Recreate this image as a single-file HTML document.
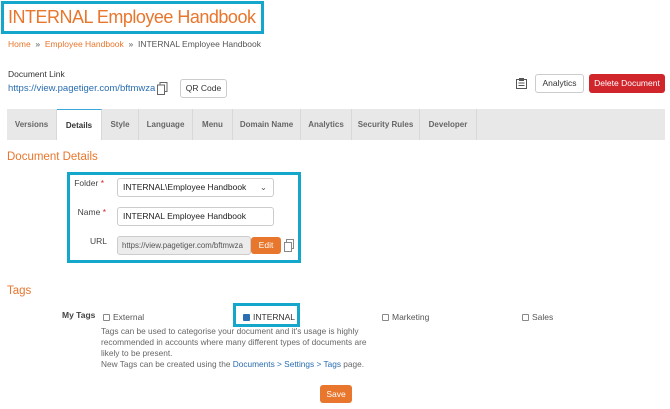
<!DOCTYPE html><html><head><style>
*{margin:0;padding:0;box-sizing:border-box}
body{width:670px;height:409px;background:#fff;font-family:"Liberation Sans",sans-serif;position:relative;overflow:hidden;color:#333}
.a{position:absolute;white-space:nowrap}
.o{color:#e8762c}
.b{color:#2a6db0}
.btn{position:absolute;border:1px solid #ccc;border-radius:3px;background:#fff;font-size:8.5px;text-align:center;color:#333}
.tab{position:absolute;top:109px;height:31px;border-right:1px solid #d8d8d8;font-size:8px;color:#666;text-align:center;line-height:31px;font-weight:bold}
.inp{position:absolute;border:1px solid #ccc;border-radius:3px;background:#fff;font-size:8.5px;padding-left:5px;line-height:17px;color:#222;overflow:hidden}
.lbl{position:absolute;font-size:8.5px;color:#444;text-align:right;width:40px}
.cb{display:inline-block;width:7px;height:7px;border:1px solid #888;border-radius:1px;vertical-align:-1px;margin-right:3px}
.hb{position:absolute;border:3px solid #14a7cb}
</style></head><body>
<div class="hb" style="left:1px;top:1px;width:263px;height:33px"></div>
<div class="a o" style="left:8px;top:7px;font-size:18px;letter-spacing:-0.5px">INTERNAL Employee Handbook</div>
<div class="a" style="left:8px;top:39px;font-size:8.5px;color:#555"><span class="o">Home</span> &nbsp;» &nbsp;<span class="o">Employee Handbook</span> &nbsp;» &nbsp;INTERNAL Employee Handbook</div>
<div class="a" style="left:8px;top:69px;font-size:8.5px;color:#333">Document Link</div>
<div class="a b" style="left:8px;top:83px;font-size:9.5px">https://view.pagetiger.com/bftmwza</div>
<svg class="a" style="left:157px;top:82px" width="11" height="13"><rect x="3" y="0.5" width="7" height="9" fill="#fff" stroke="#666"/><rect x="0.5" y="3" width="7" height="9.5" fill="#fff" stroke="#666"/></svg>
<div class="btn" style="left:180px;top:79px;width:47px;height:19px;line-height:17px">QR Code</div>
<svg class="a" style="left:516px;top:78px" width="11" height="11"><rect x="0.5" y="1.5" width="10" height="9" fill="none" stroke="#555"/><rect x="3" y="0" width="5" height="3" fill="#555"/><line x1="2.5" y1="5" x2="8.5" y2="5" stroke="#555"/><line x1="2.5" y1="7.5" x2="8.5" y2="7.5" stroke="#555"/></svg>
<div class="btn" style="left:535px;top:74px;width:49px;height:19px;line-height:17px">Analytics</div>
<div class="btn" style="left:589px;top:74px;width:76px;height:19px;line-height:19px;background:#d1252c;border:none;color:#fff">Delete Document</div>
<div class="a" style="left:7px;top:109px;width:658px;height:31px;background:#e8e8e8"></div>
<div class="tab" style="left:7px;width:50px">Versions</div>
<div class="tab" style="left:57px;width:45px;background:#fff;color:#333;border-top:1px solid #3aa8d8">Details</div>
<div class="tab" style="left:102px;width:37px">Style</div>
<div class="tab" style="left:139px;width:54px">Language</div>
<div class="tab" style="left:193px;width:40px">Menu</div>
<div class="tab" style="left:233px;width:68px">Domain Name</div>
<div class="tab" style="left:301px;width:51px">Analytics</div>
<div class="tab" style="left:352px;width:68px">Security Rules</div>
<div class="tab" style="left:420px;width:57px">Developer</div>
<div class="a o" style="left:7px;top:151px;font-size:11.5px">Document Details</div>
<div class="hb" style="left:67px;top:172px;width:234px;height:91px"></div>
<div class="lbl" style="left:64px;top:178px">Folder <span style="color:#d22">*</span></div>
<div class="inp" style="left:117px;top:178px;width:157px;height:19px">INTERNAL\Employee Handbook<span style="position:absolute;right:6px;top:0;color:#555">&#8964;</span></div>
<div class="lbl" style="left:66px;top:207px">Name <span style="color:#d22">*</span></div>
<div class="inp" style="left:117px;top:207px;width:157px;height:19px">INTERNAL Employee Handbook</div>
<div class="lbl" style="left:67px;top:236px">URL</div>
<div class="inp" style="left:117px;top:236px;width:134px;height:19px;background:#ececec;color:#555;font-size:7.8px;padding-left:4px">https://view.pagetiger.com/bftmwza</div>
<div class="btn" style="left:251px;top:237px;width:30px;height:17px;line-height:17px;background:#e8762c;border:none;color:#fff">Edit</div>
<svg class="a" style="left:284px;top:239px" width="10" height="13"><path d="M2.5 3.5V0.5H9.5V9.5H7.5" fill="none" stroke="#888"/><rect x="0.5" y="3.5" width="7" height="9" fill="#fff" stroke="#888"/></svg>
<div class="a o" style="left:7px;top:285px;font-size:11.5px">Tags</div>
<div class="a" style="left:62px;top:310px;font-size:8.5px;color:#444;font-weight:bold">My Tags</div>
<div class="a" style="left:103px;top:312px;font-size:8.5px;color:#555"><span class="cb"></span>External</div>
<div class="hb" style="left:233px;top:303px;width:67px;height:24px"></div>
<div class="a" style="left:243px;top:312px;font-size:8.5px;color:#333"><span class="cb" style="background:#2a6db0;border-color:#2a6db0"></span>INTERNAL</div>
<div class="a" style="left:382px;top:312px;font-size:8.5px;color:#555"><span class="cb"></span>Marketing</div>
<div class="a" style="left:522px;top:312px;font-size:8.5px;color:#555"><span class="cb"></span>Sales</div>
<div class="a" style="left:101px;top:326px;font-size:8.3px;color:#666;line-height:11px">Tags can be used to categorise your document and it's usage is highly<br>recommended in accounts where many different types of documents are<br>likely to be present.</div>
<div class="a" style="left:101px;top:359px;font-size:8.3px;color:#666">New Tags can be created using the <span class="b">Documents &gt; Settings &gt; Tags</span> page.</div>
<div class="btn" style="left:320px;top:385px;width:32px;height:18px;line-height:18px;background:#e8762c;border:none;color:#fff">Save</div>
</body></html>
